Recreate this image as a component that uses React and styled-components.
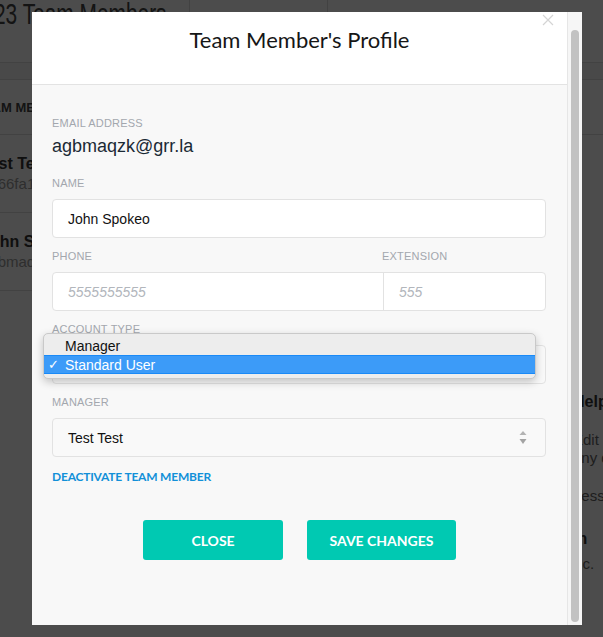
import React from "react";
import styled, { createGlobalStyle } from "styled-components";

const GlobalStyle = createGlobalStyle`
  html, body { margin: 0; padding: 0; width: 603px; height: 637px; overflow: hidden; background: #fff; }
  body { font-family: "Liberation Sans", Arial, sans-serif; }
  * { box-sizing: border-box; }
`;

/* ---------- background page ---------- */
const Page = styled.div`
  width: 603px;
  height: 637px;
  background: #fff;
  color: #333;
  overflow: hidden;
`;
const TopBar = styled.div`
  display: flex;
  height: 63px;
  border-bottom: 1px solid #dcdcdc;
`;
const BarCell = styled.div`
  width: ${(p) => p.$w}px;
  flex: ${(p) => (p.$w ? "none" : 1)};
  border-right: ${(p) => (p.$w ? "1px solid #dcdcdc" : "none")};
  overflow: hidden;
`;
const PageTitle = styled.h1`
  margin: 0 0 0 -6px;
  font: 300 29px/28px "Liberation Sans", Arial, sans-serif;
  white-space: nowrap;
  color: #444;
  transform: scaleX(0.72);
  transform-origin: left center;
`;
const Band = styled.div`
  height: 17px;
  background: #f3f3f3;
  border-bottom: 1px solid #dcdcdc;
`;
const Content = styled.div`
  display: flex;
`;
const Main = styled.div`
  flex: 1;
`;
const TableHead = styled.div`
  height: 55px;
  display: flex;
  align-items: center;
  margin-left: -25px;
  font: 700 13px "Liberation Sans", Arial, sans-serif;
  color: #444;
  border-bottom: 1px solid #dcdcdc;
`;
const MemberRow = styled.div`
  height: 78px;
  padding: 19px 0 0 0;
  margin-left: -19px;
  border-bottom: 1px solid #dcdcdc;
  white-space: nowrap;
`;
const MemberName = styled.div`
  font: 700 16px/20px "Liberation Sans", Arial, sans-serif;
  color: #333;
`;
const MemberSub = styled.div`
  font: 400 15px/20px "Liberation Sans", Arial, sans-serif;
  color: #9a9a9a;
`;
const Side = styled.div`
  width: 30px;
  white-space: nowrap;
`;
const SideTop = styled.div`
  height: 55px;
  border-bottom: 1px solid #dcdcdc;
  margin-bottom: 257px;
`;
const SideHead = styled.div`
  font: 700 16px/20px "Liberation Sans", Arial, sans-serif;
  color: #333;
  margin: ${(p) => p.$m || "0"};
`;
const SideText = styled.div`
  font: 400 15px/18px "Liberation Sans", Arial, sans-serif;
  color: #666;
  margin: ${(p) => p.$m || "0"};
`;

/* ---------- overlay & modal ---------- */
const Overlay = styled.div`
  position: fixed;
  inset: 0;
  background: rgba(0, 0, 0, 0.7);
  display: flex;
  align-items: flex-start;
  padding: 12px 0 0 32px;
`;
const Modal = styled.div`
  width: 550px;
  height: 613px;
  display: flex;
  background: #f8f8f8;
  overflow: hidden;
`;
const ModalMain = styled.div`
  flex: 1;
  display: flex;
  flex-direction: column;
`;
const ModalHeader = styled.div`
  position: relative;
  height: 73px;
  background: #fff;
  border-bottom: 1px solid #e3e3e3;
  padding-top: 15px;
  text-align: center;
`;
const ModalTitle = styled.h2`
  margin: 0;
  font: 400 22px/26px Lato, "Liberation Sans", sans-serif;
  color: #161616;
`;
const CloseX = styled.button`
  position: absolute;
  top: 2px;
  right: 13px;
  width: 12px;
  height: 12px;
  padding: 0;
  border: 0;
  background: transparent;
  display: flex;
`;
const ModalBody = styled.div`
  flex: 1;
  padding: 32px 21px 0 20px;
  display: flex;
  flex-direction: column;
`;
const Label = styled.div`
  font: 400 11px/13px "Liberation Sans", Arial, sans-serif;
  letter-spacing: 0.2px;
  color: #a3a7ae;
  text-transform: uppercase;
  margin-bottom: ${(p) => (p.$tight ? 5 : 9)}px;
`;
const EmailValue = styled.div`
  font: 400 18px/22px "Liberation Sans", Arial, sans-serif;
  color: #1b2a35;
  margin-bottom: 20px;
`;
const Field = styled.div`
  position: relative;
  margin-bottom: 12px;
`;
const Input = styled.div`
  height: 39px;
  display: flex;
  align-items: center;
  padding: 0 15px;
  background: #fff;
  border: 1px solid #e2e2e2;
  border-radius: 4px;
  font: 400 14px "Liberation Sans", Arial, sans-serif;
  color: #111;
`;
const SplitRow = styled.div`
  display: grid;
  grid-template-columns: 330px 1fr;
`;
const SplitBox = styled(SplitRow)`
  height: 39px;
  background: #fff;
  border: 1px solid #e2e2e2;
  border-radius: 4px;
`;
const SplitCell = styled.div`
  display: flex;
  align-items: center;
  padding-left: 15px;
  border-left: ${(p) => (p.$first ? "none" : "1px solid #e2e2e2")};
  font: italic 400 14px "Liberation Sans", Arial, sans-serif;
  color: #b2b6bc;
`;
const Select = styled.div`
  height: 39px;
  display: flex;
  align-items: center;
  justify-content: space-between;
  padding: 0 18px 0 15px;
  background: #f9f9f9;
  border: 1px solid #e2e2e2;
  border-radius: 4px;
  font: 400 14px "Liberation Sans", Arial, sans-serif;
  color: #111;
`;
const Popup = styled.div`
  position: absolute;
  left: -9px;
  right: 10px;
  top: 10px;
  height: 46px;
  padding-top: 2px;
  background: #ededed;
  border: 1px solid #c9c9c9;
  border-radius: 5px;
  box-shadow: 0 3px 8px rgba(0, 0, 0, 0.22);
  z-index: 2;
`;
const Option = styled.div`
  height: 19px;
  display: flex;
  align-items: center;
  padding-left: 4px;
  font: 400 14px "Liberation Sans", Arial, sans-serif;
  color: ${(p) => (p.$active ? "#fff" : "#111")};
  background: ${(p) => (p.$active ? "#3c9bf8" : "transparent")};
  border-top: ${(p) => (p.$active ? "1px solid #1a8af7" : "none")};
  border-bottom: ${(p) => (p.$active ? "1px solid #1a8af7" : "none")};
`;
const Check = styled.span`
  width: 17px;
  font-size: 13px;
`;
const DeactivateLink = styled.a`
  font: 700 12px/15px Lato, "Liberation Sans", sans-serif;
  letter-spacing: -0.2px;
  color: #1290d8;
  text-transform: uppercase;
  cursor: pointer;
`;
const Buttons = styled.div`
  display: flex;
  justify-content: center;
  gap: 24px;
  margin-top: 36px;
  padding-left: 1px;
`;
const Button = styled.button`
  width: ${(p) => p.$w}px;
  height: 40px;
  border: 0;
  border-radius: 3px;
  background: #00c9b2;
  color: #fff;
  font: 700 14px Lato, "Liberation Sans", sans-serif;
  text-transform: uppercase;
  cursor: pointer;
`;
const ScrollTrack = styled.div`
  width: 15px;
  background: #f6f6f6;
  border-left: 1px solid #e6e6e6;
  padding: 18px 3px 3px 3px;
  display: flex;
`;
const ScrollThumb = styled.div`
  flex: 1;
  background: #c2c2c2;
  border-radius: 4px;
`;

const SortArrows = () => (
  <svg width="8" height="13" viewBox="0 0 8 13">
    <path d="M4 0 L7.5 4 L0.5 4 Z" fill="#b3b3b3" />
    <path d="M4 13 L7.5 8 L0.5 8 Z" fill="#a3a3a3" />
  </svg>
);

export default function App() {
  return (
    <>
      <GlobalStyle />
      <Page>
        <TopBar>
          <BarCell $w={190}>
            <PageTitle>23 Team Members</PageTitle>
          </BarCell>
          <BarCell $w={138} />
          <BarCell />
        </TopBar>
        <Band />
        <Content>
          <Main>
            <TableHead>TEAM MEMBER</TableHead>
            <MemberRow>
              <MemberName>Test Test</MemberName>
              <MemberSub>a566fa1c2b8e</MemberSub>
            </MemberRow>
            <MemberRow>
              <MemberName>John Spokeo</MemberName>
              <MemberSub>agbmaqzk@grr.la</MemberSub>
            </MemberRow>
          </Main>
          <Side>
            <SideTop />
            <SideHead>Help</SideHead>
            <SideText $m="19px 0 0 0">Edit Profile</SideText>
            <SideText>any questions</SideText>
            <SideText $m="20px 0 0 0">Less Support</SideText>
            <SideHead $m="24px 0 0 0">In</SideHead>
            <SideText $m="6px 0 0 -3px">Inc.</SideText>
          </Side>
        </Content>
      </Page>

      <Overlay>
        <Modal>
          <ModalMain>
            <ModalHeader>
              <ModalTitle>Team Member's Profile</ModalTitle>
              <CloseX aria-label="Close">
                <svg width="12" height="12" viewBox="0 0 12 12">
                  <path d="M1 1 L11 11 M11 1 L1 11" stroke="#d4d4d4" strokeWidth="1.2" />
                </svg>
              </CloseX>
            </ModalHeader>
            <ModalBody>
              <Label $tight>Email Address</Label>
              <EmailValue>agbmaqzk@grr.la</EmailValue>

              <Field>
                <Label>Name</Label>
                <Input>John Spokeo</Input>
              </Field>

              <Field>
                <SplitRow>
                  <Label>Phone</Label>
                  <Label>Extension</Label>
                </SplitRow>
                <SplitBox>
                  <SplitCell $first>5555555555</SplitCell>
                  <SplitCell>555</SplitCell>
                </SplitBox>
              </Field>

              <Field>
                <Label>Account Type</Label>
                <Select>
                  Standard User
                  <SortArrows />
                </Select>
                <Popup>
                  <Option>
                    <Check />
                    Manager
                  </Option>
                  <Option $active>
                    <Check>✓</Check>
                    Standard User
                  </Option>
                </Popup>
              </Field>

              <Field>
                <Label>Manager</Label>
                <Select>
                  Test Test
                  <SortArrows />
                </Select>
              </Field>

              <DeactivateLink>Deactivate Team Member</DeactivateLink>

              <Buttons>
                <Button $w={140}>Close</Button>
                <Button $w={149}>Save Changes</Button>
              </Buttons>
            </ModalBody>
          </ModalMain>
          <ScrollTrack>
            <ScrollThumb />
          </ScrollTrack>
        </Modal>
      </Overlay>
    </>
  );
}
